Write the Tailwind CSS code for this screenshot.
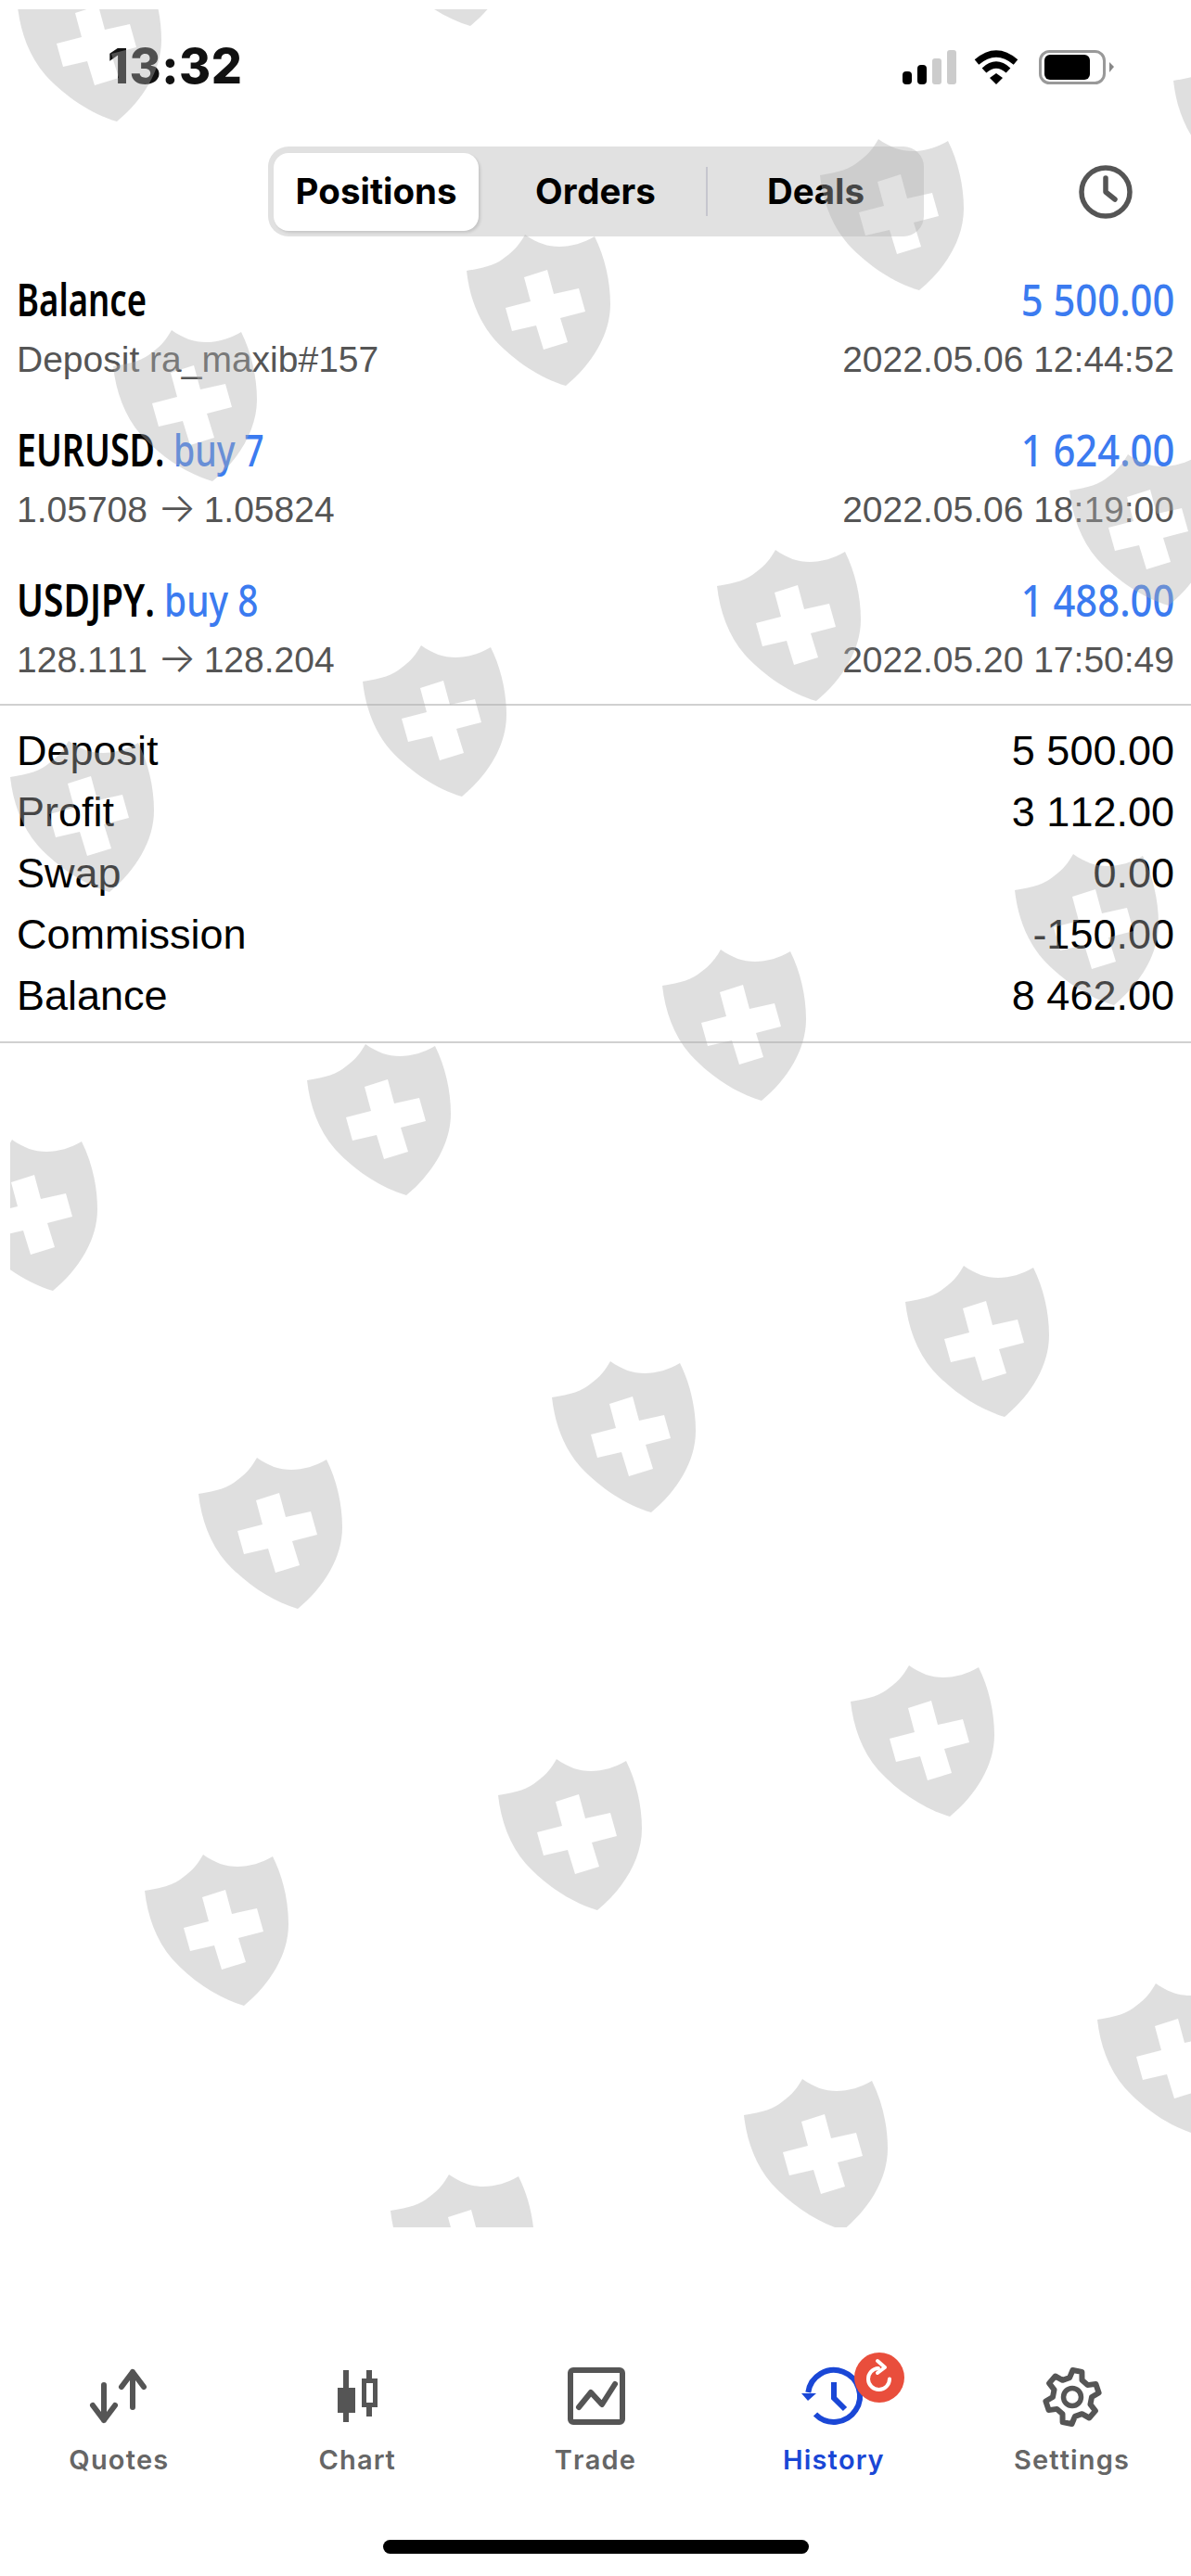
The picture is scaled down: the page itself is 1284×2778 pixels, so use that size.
<!DOCTYPE html>
<html lang="en">
<head>
<meta charset="UTF-8">
<meta name="viewport" content="width=device-width, initial-scale=1.0">
<title>History</title>
<script src="https://cdn.jsdelivr.net/npm/@tailwindcss/browser@4"></script>
</head>
<body class="bg-white">
<div class="relative w-[1284px] h-[2778px] overflow-hidden flex flex-col bg-white font-['Liberation_Sans',sans-serif] [font-kerning:none]">

    <!-- status bar -->
    <div class="h-[158px] flex justify-between items-start pl-[116px] pr-[82px] shrink-0">
        <span class="mt-[42px] text-[52px] leading-[60px] font-extrabold tracking-[0.01em] text-[#111] font-['Inter',sans-serif]">13:32</span>
        <div class="flex items-start mt-[54px]">
            <svg width="60" height="37" viewBox="0 0 60 37">
                <rect x="2" y="23" width="10" height="14" rx="4" fill="#000"/>
                <rect x="18" y="16" width="10" height="21" rx="4" fill="#000"/>
                <rect x="34" y="9" width="10" height="28" rx="3" fill="#ccc"/>
                <rect x="50" y="0" width="10" height="37" rx="3" fill="#ccc"/>
            </svg>
            <svg class="ml-[19px]" width="50" height="37" viewBox="0 0 50 37">
                <path d="M3 13Q24 -5 45 13" fill="none" stroke="#000" stroke-width="7"/>
                <path d="M11 22Q24 10 37 22" fill="none" stroke="#000" stroke-width="7"/>
                <path d="M17 30L24 25L31 30L24 37Z" fill="#000"/>
            </svg>
            <svg class="ml-[20px]" width="82" height="37" viewBox="0 0 82 37">
                <rect x="1.5" y="1.5" width="69" height="34" rx="10" fill="none" stroke="#999" stroke-width="3"/>
                <rect x="6" y="5" width="49" height="27" rx="6" fill="#000"/>
                <path d="M76 13L81 18L76 24Z" fill="#888"/>
            </svg>
        </div>
    </div>

    <!-- segmented control -->
    <div class="h-[97px] flex items-center justify-between pl-[289px] pr-[63px] shrink-0">
        <div class="w-[707px] h-[97px] p-[6px] rounded-[22px] bg-[#e1e1e1] flex items-center font-['Inter',sans-serif] text-[38.5px] font-bold text-black">
            <div class="w-[221px] h-[84px] rounded-[16px] bg-white shadow-[2px_2px_3px_rgba(0,0,0,0.12)] flex items-center justify-center">Positions</div>
            <div class="w-[245px] pl-[61px]">Orders</div>
            <div class="w-[2px] h-[53px] bg-[#c6c6ce]"></div>
            <div class="pl-[64px]">Deals</div>
        </div>
        <svg width="58" height="60" viewBox="0 0 58 60" fill="none" stroke="#555" stroke-width="5.5" stroke-linecap="round" stroke-linejoin="round">
            <circle cx="29" cy="30" r="26"/>
            <path d="M29 15V30L39 38"/>
        </svg>
    </div>

    <!-- deals -->
    <div class="pt-[19px] shrink-0">
        <div class="h-[162px] pt-[16px] px-[18px] flex flex-col">
            <div class="h-[66px] flex justify-between items-center text-[48px] leading-[60px] font-['Noto_Sans',sans-serif]">
                <div class="font-semibold text-black origin-left scale-x-[.76]">Balance</div>
                <div class="font-medium text-[#3b7bf0] origin-right scale-x-[.87]">5 500.00</div>
            </div>
            <div class="h-[64px] flex justify-between items-center text-[39px] text-[#555]">
                <div>Deposit ra_maxib#157</div>
                <div>2022.05.06 12:44:52</div>
            </div>
        </div>
        <div class="h-[162px] pt-[16px] px-[18px] flex flex-col">
            <div class="h-[66px] flex justify-between items-center text-[48px] leading-[60px] font-['Noto_Sans',sans-serif]">
                <div class="font-semibold text-black origin-left scale-x-[.78]">EURUSD. <span class="font-medium text-[#3b7bf0]">buy 7</span></div>
                <div class="font-medium text-[#3b7bf0] origin-right scale-x-[.87]">1 624.00</div>
            </div>
            <div class="h-[64px] flex justify-between items-center text-[39px] text-[#555]">
                <div>1.05708 <span class="inline-block w-[39px] text-center font-['Inter',sans-serif] text-[44px] leading-none font-light">→</span> 1.05824</div>
                <div>2022.05.06 18:19:00</div>
            </div>
        </div>
        <div class="h-[162px] pt-[16px] px-[18px] flex flex-col">
            <div class="h-[66px] flex justify-between items-center text-[48px] leading-[60px] font-['Noto_Sans',sans-serif]">
                <div class="font-semibold text-black origin-left scale-x-[.81]">USDJPY. <span class="font-medium text-[#3b7bf0]">buy 8</span></div>
                <div class="font-medium text-[#3b7bf0] origin-right scale-x-[.87]">1 488.00</div>
            </div>
            <div class="h-[64px] flex justify-between items-center text-[39px] text-[#555]">
                <div>128.111 <span class="inline-block w-[39px] text-center font-['Inter',sans-serif] text-[44px] leading-none font-light">→</span> 128.204</div>
                <div>2022.05.20 17:50:49</div>
            </div>
        </div>
    </div>

    <!-- totals -->
    <div class="border-y-2 border-[#d0d0d0] py-[16px] px-[18px] text-[45px] leading-[66px] text-black shrink-0 -mt-[1px]">
        <div class="flex justify-between"><span>Deposit</span><span>5 500.00</span></div>
        <div class="flex justify-between"><span>Profit</span><span>3 112.00</span></div>
        <div class="flex justify-between"><span>Swap</span><span>0.00</span></div>
        <div class="flex justify-between"><span>Commission</span><span>-150.00</span></div>
        <div class="flex justify-between"><span>Balance</span><span>8 462.00</span></div>
    </div>

    <!-- tab bar -->
    <div class="mt-auto shrink-0">
        <div class="grid grid-cols-5 font-['Inter',sans-serif] text-[29px] leading-[34px] font-semibold tracking-[0.04em] text-[#666]">
            <div class="flex flex-col items-center gap-[19px]">
                <svg width="64" height="64" viewBox="0 0 64 64" fill="none" stroke="#555" stroke-width="6" stroke-linecap="round" stroke-linejoin="round">
                    <path d="M16 19V57M4 41L16 57L28 41"/>
                    <path d="M47 43V5M35 21L47 5L59 21"/>
                </svg>
                <span>Quotes</span>
            </div>
            <div class="flex flex-col items-center gap-[19px]">
                <svg width="64" height="64" viewBox="0 0 64 64">
                    <rect x="17" y="3" width="6" height="56" fill="#555"/>
                    <rect x="11" y="22" width="19" height="27" fill="#555"/>
                    <rect x="42" y="3" width="6" height="50" fill="#555"/>
                    <rect x="39.5" y="14.5" width="12" height="26" fill="#fff" stroke="#555" stroke-width="5"/>
                </svg>
                <span>Chart</span>
            </div>
            <div class="flex flex-col items-center gap-[19px]">
                <svg width="64" height="64" viewBox="0 0 64 64" fill="none" stroke="#555" stroke-width="6" stroke-linecap="round" stroke-linejoin="round">
                    <rect x="5" y="3" width="56" height="56" rx="3"/>
                    <path d="M14 43L27 27L39 40L53 18"/>
                </svg>
                <span>Trade</span>
            </div>
            <div class="flex flex-col items-center gap-[19px] text-[#1a47d6]">
                <div class="relative w-[64px] h-[64px]">
                    <svg class="overflow-visible" width="64" height="64" viewBox="0 0 64 64" fill="none" stroke="#1a47d6" stroke-width="6">
                        <path d="M4.3 27A28 28 0 1 1 12 50.5"/>
                        <path d="M-3 28H13L4 36Z" fill="#1a47d6" stroke="none"/>
                        <path d="M32 16V33L44 45"/>
                    </svg>
                    <div class="absolute left-[54px] -top-[16px] w-[54px] h-[54px] rounded-full bg-[#e94e3c]">
                        <svg width="54" height="54" viewBox="0 0 54 54" fill="none" stroke="#fff" stroke-width="4" stroke-linecap="round" stroke-linejoin="round">
                            <path d="M26 17A11.500 11.500 0 1 0 38 28.500"/>
                            <path d="M25 9L33 16L25 22"/>
                        </svg>
                    </div>
                </div>
                <span>History</span>
            </div>
            <div class="flex flex-col items-center gap-[19px]">
                <svg width="64" height="64" viewBox="-32 -32 64 64" fill="none" stroke="#555" stroke-width="6" stroke-linejoin="round">
                    <path id="gear"/>
                    <circle r="9.500" stroke-width="5.500"/>
                </svg>
                <span>Settings</span>
            </div>
        </div>
        <div class="flex justify-center pt-[69px] pb-[24px]">
            <div class="w-[459px] h-[15px] rounded-full bg-black"></div>
        </div>
    </div>

    <!-- watermark sits over everything, the tabs and text show through it -->
    <svg class="absolute inset-0 pointer-events-none" width="1284" height="2778" viewBox="0 0 1284 2778">
        <defs>
            <clipPath id="wm-clip"><rect x="11" y="10" width="1273" height="2392"/></clipPath>
            <path id="shield" fill-rule="evenodd" fill="#afafaf" fill-opacity="0.4" d="M63 0C76 9 87 13 100 13C113 13 126 9 138 2C149 24 155 50 155 75C155 108 135 140 107 163C80 155 52 137 30 113C12 92 3 66 0 39C20 36 33 32 42 24C52 17 58 9 63 0ZM62 46L87 38L94 64L121 58L128 83L101 90L109 116L83 124L75 98L49 104L42 79L69 72Z"/>
        </defs>
        <g clip-path="url(#wm-clip)">
            <use href="#shield" x="19" y="-32"/><use href="#shield" x="400" y="-135"/>
            <use href="#shield" x="122" y="356"/><use href="#shield" x="503" y="253"/><use href="#shield" x="884" y="150"/><use href="#shield" x="1265" y="48"/>
            <use href="#shield" x="11" y="799"/><use href="#shield" x="391" y="696"/><use href="#shield" x="773" y="593"/><use href="#shield" x="1153" y="490"/>
            <use href="#shield" x="-50" y="1229"/><use href="#shield" x="331" y="1126"/><use href="#shield" x="714" y="1024"/><use href="#shield" x="1094" y="921"/>
            <use href="#shield" x="214" y="1572"/><use href="#shield" x="595" y="1468"/><use href="#shield" x="976" y="1365"/>
            <use href="#shield" x="156" y="2000"/><use href="#shield" x="537" y="1897"/><use href="#shield" x="917" y="1796"/>
            <use href="#shield" x="421" y="2345"/><use href="#shield" x="802" y="2242"/><use href="#shield" x="1183" y="2139"/>
        </g>
    </svg>
</div>
<script>
// six teeth, first one points up and slightly right
const pts = [];
for (let i = 0; i < 6; i++) {
    const a = -79 + i * 60;
    [[-19, 21], [-10, 29], [10, 29], [19, 21]].forEach(([da, r]) => {
        const t = (a + da) * Math.PI / 180;
        pts.push((r * Math.cos(t)).toFixed(1) + ' ' + (r * Math.sin(t)).toFixed(1));
    });
}
document.getElementById('gear').setAttribute('d', 'M' + pts.join('L') + 'Z');
</script>
</body>
</html>
